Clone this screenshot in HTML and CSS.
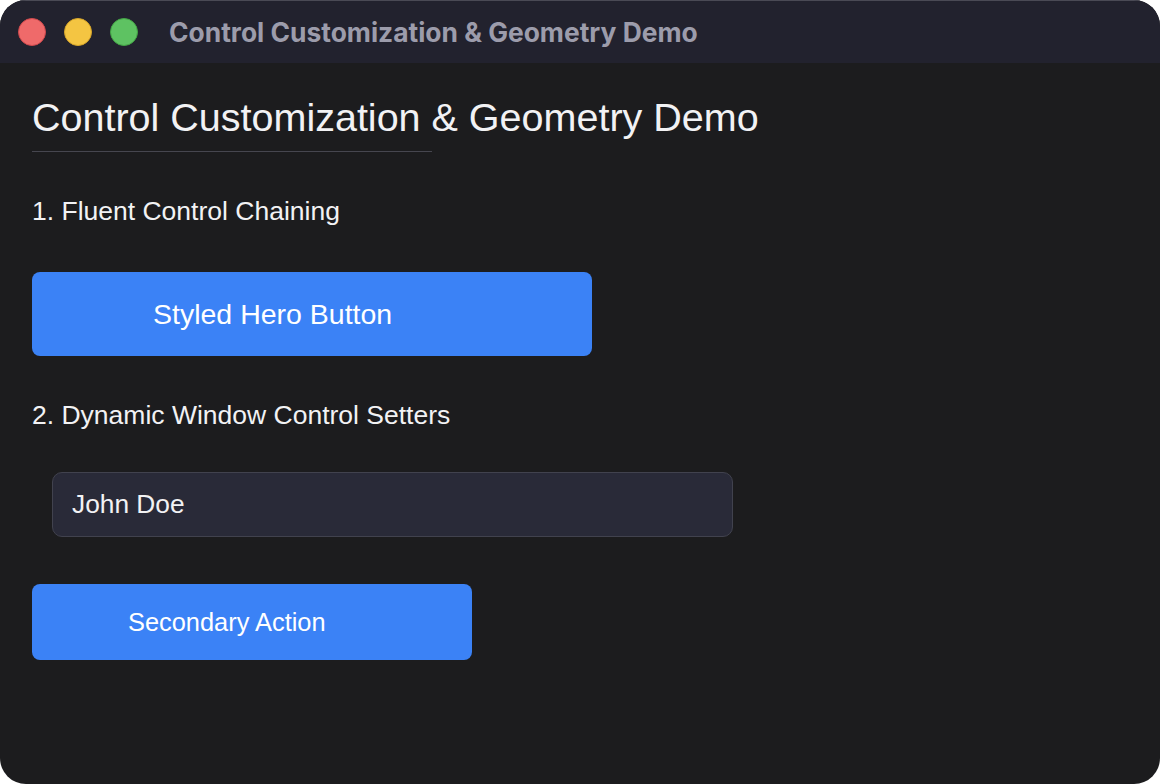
FILE: index.html
```html
<!DOCTYPE html>
<html lang="en">
<head>
<meta charset="UTF-8" />
<title>Control Customization &amp; Geometry Demo</title>
<link rel="stylesheet" href="styles.css">
</head>
<body>
  <div class="window">
    <div class="titlebar">
      <div class="lights">
        <span class="light red"></span>
        <span class="light yellow"></span>
        <span class="light green"></span>
      </div>
      <div class="title">Control Customization &amp; Geometry Demo</div>
    </div>

    <div class="content">
      <h1>Control Customization &amp; Geometry Demo</h1>
      <div class="divider"></div>

      <p class="section-label">1. Fluent Control Chaining</p>
      <button class="hero-btn">Styled Hero Button</button>

      <p class="section-label">2. Dynamic Window Control Setters</p>
      <input type="text" class="name-input" value="John Doe" />
      <button class="secondary-btn">Secondary Action</button>
    </div>
  </div>
</body>
</html>
```

FILE: styles.css
```css
body {
  margin: 0;
  background: #ffffff;
  font-family: "Liberation Sans", Arial, sans-serif;
}
.window {
  width: 1160px;
  height: 784px;
  border-radius: 26px;
  overflow: hidden;
  background: #1c1c1e;
  display: flex;
  flex-direction: column;
}
.titlebar {
  height: 63px;
  background: #22222e;
  border-top: 1px solid #4a4a55;
  box-sizing: border-box;
  display: flex;
  align-items: center;
  padding-left: 18px;
  flex-shrink: 0;
}
.lights {
  display: flex;
  gap: 18px;
}
.light {
  width: 28px;
  height: 28px;
  border-radius: 50%;
  box-sizing: border-box;
}
.red { background: #ef6a6a; border: 1px solid #d0494d; }
.yellow { background: #f4c542; border: 1px solid #d6a52a; }
.green { background: #5ec262; border: 1px solid #43a445; }
.title {
  margin-left: 31px;
  font-family: Inter, "Noto Sans", sans-serif;
  font-weight: 700;
  font-size: 26.4px;
  color: #9c9cab;
}
.content {
  padding: 31px 32px 0;
  display: flex;
  flex-direction: column;
  align-items: flex-start;
}
h1 {
  margin: 0;
  font-weight: 400;
  font-size: 39.5px;
  line-height: 46px;
  color: #f2f2f4;
}
.divider {
  width: 400px;
  height: 1px;
  background: #46464f;
  margin-top: 11px;
}
.section-label {
  margin: 45px 0 0;
  font-size: 26.5px;
  line-height: 28px;
  color: #f2f2f4;
}
.hero-btn,
.secondary-btn {
  border: none;
  background: #3b82f6;
  color: #ffffff;
  font-family: "Liberation Sans", Arial, sans-serif;
  text-align: left;
  border-radius: 8px;
  cursor: pointer;
}
.hero-btn {
  margin-top: 47px;
  width: 560px;
  height: 84px;
  padding-left: 121px;
  font-size: 28.5px;
}
.name-input {
  margin: 43px 0 0 20px;
  width: 681px;
  height: 65px;
  box-sizing: border-box;
  background: #292a38;
  border: 1px solid #41424e;
  border-radius: 10px;
  padding: 0 19px;
  font-family: "Liberation Sans", Arial, sans-serif;
  font-size: 26.3px;
  color: #f2f2f4;
  outline: none;
}
.secondary-btn {
  margin-top: 47px;
  width: 440px;
  height: 76px;
  padding-left: 96px;
  font-size: 25.4px;
}
```
